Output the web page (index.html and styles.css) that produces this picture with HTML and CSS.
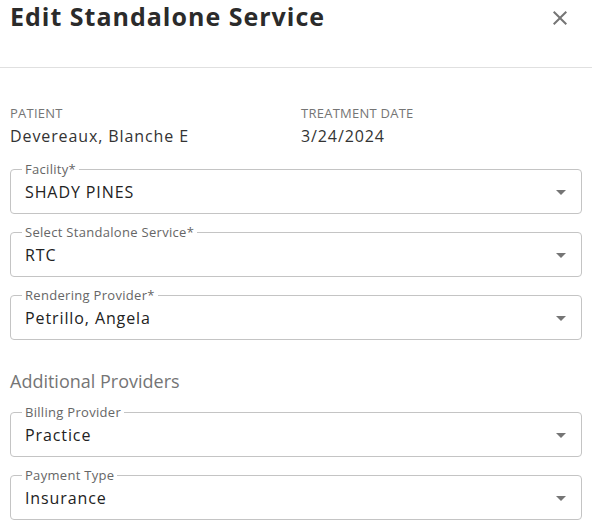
FILE: index.html
```html
<!DOCTYPE html>
<html>
<head>
<meta charset="utf-8">
<link rel="stylesheet" href="styles.css">
</head>
<body>
<div class="dialog">
  <header class="header">
    <h1 class="title">Edit Standalone Service</h1>
    <button class="close" aria-label="Close">
      <svg viewBox="0 0 24 24" width="24" height="24"><path d="M19 6.41 17.59 5 12 10.59 6.41 5 5 6.41 10.59 12 5 17.59 6.41 19 12 13.41 17.59 19 19 17.59 13.41 12z"/></svg>
    </button>
  </header>
  <div class="content">
    <div class="info">
      <div class="info-item">
        <div class="info-label">PATIENT</div>
        <div class="info-value">Devereaux, Blanche E</div>
      </div>
      <div class="info-item">
        <div class="info-label">TREATMENT DATE</div>
        <div class="info-value">3/24/2024</div>
      </div>
    </div>
    <div class="fields">
      <fieldset class="field">
        <legend>Facility*</legend>
        <div class="field-row"><span class="field-value">SHADY PINES</span><svg class="arrow" viewBox="0 0 24 24" width="24" height="24"><path d="M7 10l5 5 5-5z"/></svg></div>
      </fieldset>
      <fieldset class="field">
        <legend>Select Standalone Service*</legend>
        <div class="field-row"><span class="field-value">RTC</span><svg class="arrow" viewBox="0 0 24 24" width="24" height="24"><path d="M7 10l5 5 5-5z"/></svg></div>
      </fieldset>
      <fieldset class="field">
        <legend>Rendering Provider*</legend>
        <div class="field-row"><span class="field-value">Petrillo, Angela</span><svg class="arrow" viewBox="0 0 24 24" width="24" height="24"><path d="M7 10l5 5 5-5z"/></svg></div>
      </fieldset>
    </div>
    <h2 class="section">Additional Providers</h2>
    <div class="fields fields-extra">
      <fieldset class="field">
        <legend>Billing Provider</legend>
        <div class="field-row"><span class="field-value">Practice</span><svg class="arrow" viewBox="0 0 24 24" width="24" height="24"><path d="M7 10l5 5 5-5z"/></svg></div>
      </fieldset>
      <fieldset class="field">
        <legend>Payment Type</legend>
        <div class="field-row"><span class="field-value">Insurance</span><svg class="arrow" viewBox="0 0 24 24" width="24" height="24"><path d="M7 10l5 5 5-5z"/></svg></div>
      </fieldset>
    </div>
  </div>
</div>
</body>
</html>
```
FILE: styles.css
```css
* { box-sizing: border-box; }
html, body { margin: 0; padding: 0; background: #fff; }
body {
  font-family: "Open Sans", "Liberation Sans", sans-serif;
  color: #222;
  width: 592px;
  overflow: hidden;
}
.header {
  height: 68px;
  border-bottom: 1px solid #e0e0e0;
  display: flex;
  align-items: flex-start;
  justify-content: space-between;
  padding: 0 20px 0 10px;
}
.title {
  margin: 0;
  font-size: 25px;
  line-height: 32px;
  font-weight: 700;
  letter-spacing: 1px;
  color: #2b2b2b;
}
.close {
  border: 0;
  background: none;
  padding: 0;
  margin-top: 6px;
  width: 24px;
  height: 24px;
  fill: #757575;
  display: flex;
}
.content {
  padding: 36px 10px 0 10px;
}
.info {
  display: grid;
  grid-template-columns: 291px 1fr;
}
.info-label {
  font-size: 13px;
  line-height: 18px;
  letter-spacing: 0.25px;
  color: #757575;
}
.info-value {
  margin-top: 2px;
  font-size: 16px;
  line-height: 24px;
  letter-spacing: 0.9px;
  color: #333;
}
.fields {
  display: flex;
  flex-direction: column;
  gap: 10px;
  margin-top: 13px;
}
.fields-extra { margin-top: 11px; }
.field {
  margin: 0;
  border: 1px solid #c4c4c4;
  border-radius: 4px;
  padding: 3px 8px 9px 14px;
  min-width: 0;
}
.field legend {
  font-size: 13px;
  line-height: 16px;
  letter-spacing: 0.3px;
  color: #666;
  padding: 0 3px;
  margin-left: -3px;
}
.field-row {
  display: flex;
  align-items: center;
  justify-content: space-between;
  height: 24px;
}
.field-value {
  font-size: 16px;
  line-height: 24px;
  letter-spacing: 0.9px;
  color: #222;
}
.arrow { fill: #757575; flex: none; }
.section {
  margin: 29px 0 0 0;
  font-size: 18px;
  line-height: 24px;
  font-weight: 400;
  color: #757575;
}
```
